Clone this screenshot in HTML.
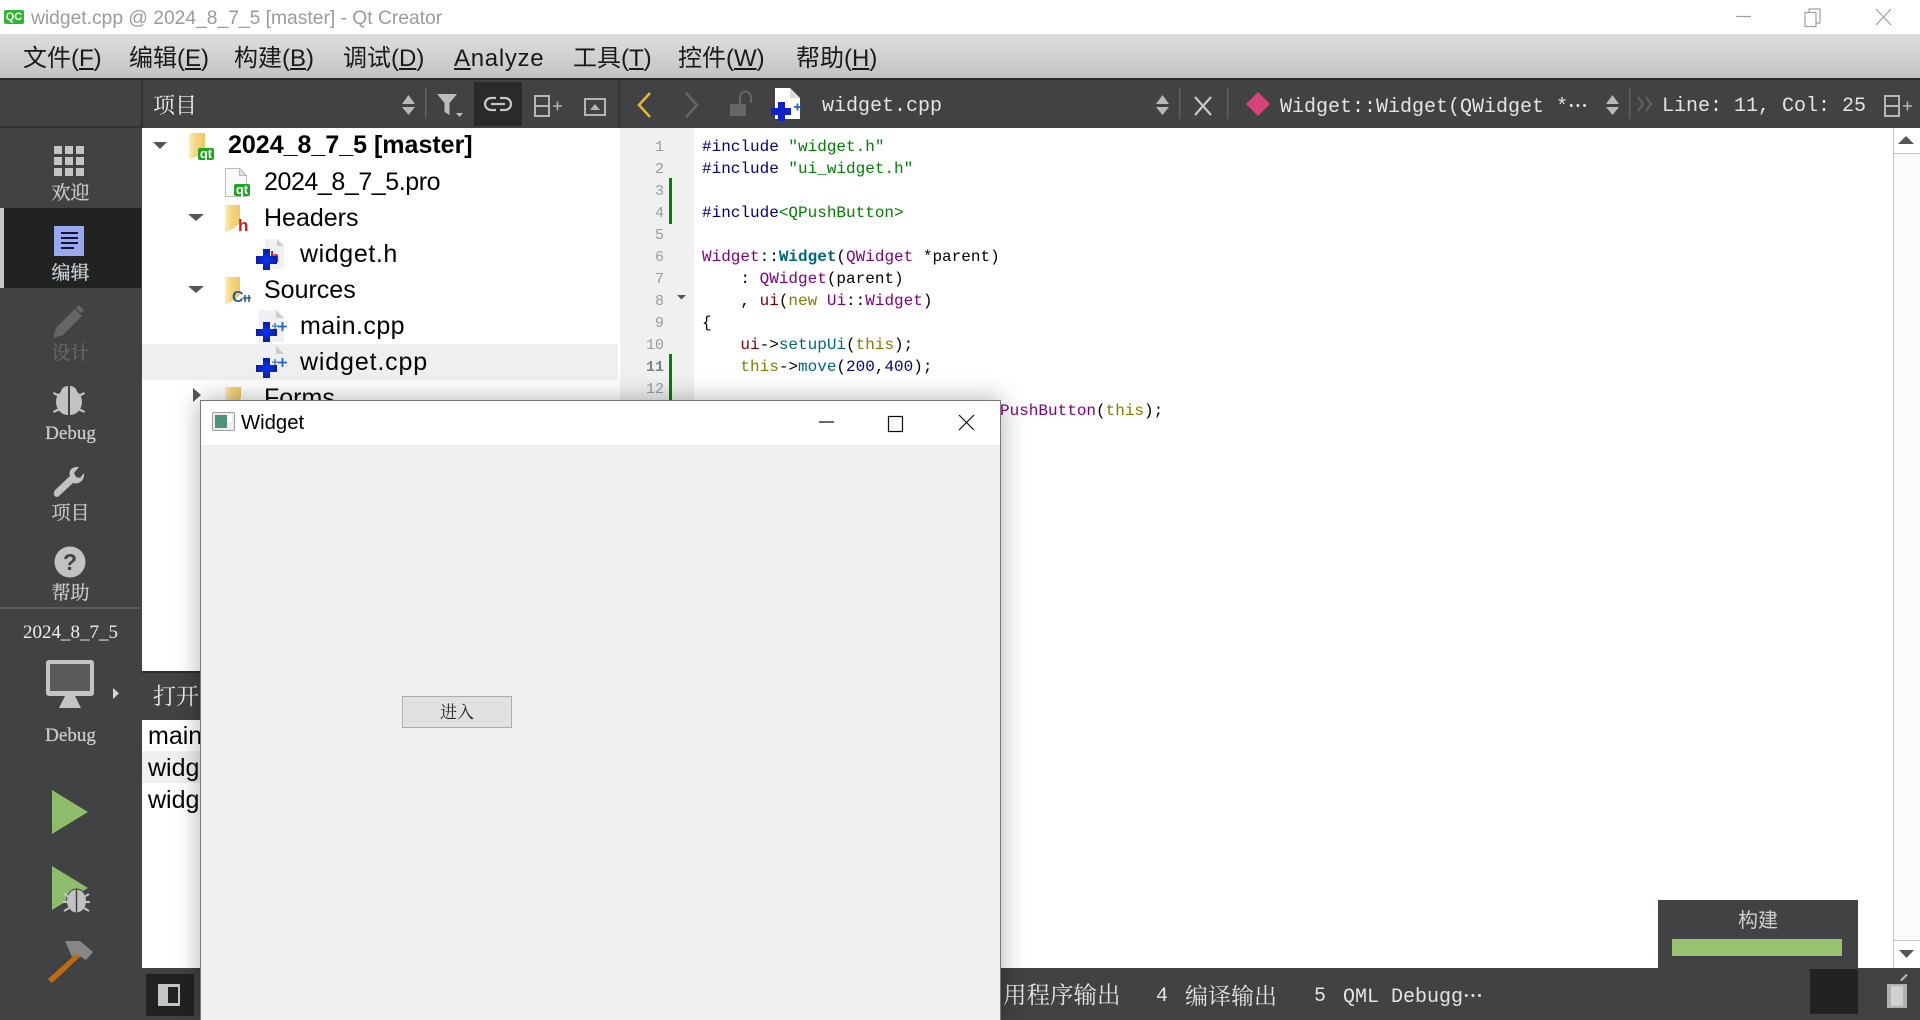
<!DOCTYPE html>
<html><head><meta charset="utf-8"><style>
html,body{margin:0;padding:0;background:#fff}
body{width:1920px;height:1020px;overflow:hidden;position:relative}
.a{position:absolute;white-space:pre}
.b{position:absolute}
.sans{font-family:"Liberation Sans","Noto Sans CJK SC",sans-serif}
.serif{font-family:"Liberation Serif","Noto Serif CJK SC",serif}
.mono{font-family:"Liberation Mono","Noto Serif CJK SC",monospace}
.m{font:24px/44px "Liberation Sans","Noto Sans CJK SC",sans-serif;color:#1a1a1a;top:37px}
.m u{text-underline-offset:2px}
.t{font:25px/36px "Liberation Sans","Noto Sans CJK SC",sans-serif;color:#000}
.s{font:19px/24px "Liberation Serif","Noto Serif CJK SC",serif;color:#c9c9c9;width:141px;left:0;text-align:center;-webkit-text-stroke:.3px}
.tb{font:20px/30px "Liberation Mono","Noto Serif CJK SC",monospace;color:#e4e4e4;top:92px}
.n{font:15px/22px "Liberation Mono",monospace;color:#9a9a9a;width:50px;left:614px;text-align:right}
.c{font:16px/22px "Liberation Mono",monospace;color:#000;left:702px}
.p{color:#800080}.g{color:#008000}.y{color:#808000}.bl{color:#000080}.k{color:#00677c;font-weight:bold}.r{color:#800000}
</style></head><body>

<!-- title bar -->
<div class="b" style="left:0;top:0;width:1920px;height:34px;background:#fff"></div>
<div class="b" style="left:4px;top:10px;width:20px;height:14px;background:#31b531;border-radius:2px;color:#fff;font:bold 11px/14px 'Liberation Sans',sans-serif;text-align:center">QC</div>
<div class="a sans" style="left:31px;top:6px;font-size:19.25px;line-height:26px;color:#9b9b9b">widget.cpp @ 2024_8_7_5 [master] - Qt Creator</div>
<svg class="b" style="left:1730px;top:5px" width="170" height="24" fill="none" stroke="#a0a0a0" stroke-width="1.2">
<path d="M6 11.5H21"/><path d="M75 7.5h11v14H75zM79 7.500V4h11v14h-4"/><path d="M146 4l15 16M161 4l-15 16"/></svg>

<!-- menu -->
<div class="b" style="left:0;top:34px;width:1920px;height:44px;background:linear-gradient(#dedede,#c3c3c3)"></div>
<div class="a m" style="left:23px">文件(<u>F</u>)</div>
<div class="a m" style="left:129px">编辑(<u>E</u>)</div>
<div class="a m" style="left:234px">构建(<u>B</u>)</div>
<div class="a m" style="left:343px">调试(<u>D</u>)</div>
<div class="a m" style="left:454px;letter-spacing:.7px"><u>A</u>nalyze</div>
<div class="a m" style="left:573px">工具(<u>T</u>)</div>
<div class="a m" style="left:678px">控件(<u>W</u>)</div>
<div class="a m" style="left:796px">帮助(<u>H</u>)</div>

<!-- toolbar row -->
<div class="b" style="left:0;top:78px;width:1920px;height:50px;background:#404244;border-top:2px solid #2a2a2a;box-sizing:border-box"></div>
<div class="b" style="left:0;top:126px;width:141px;height:2px;background:#333"></div>
<div class="b" style="left:141px;top:80px;width:2px;height:48px;background:#333"></div>
<div class="b" style="left:618px;top:80px;width:2px;height:48px;background:#333"></div>
<div class="a serif" style="left:153px;top:91px;font-size:22px;line-height:30px;color:#ededed">项目</div>
<div class="b" style="left:474px;top:82px;width:48px;height:44px;background:#2a2a2a"></div>
<svg class="b" style="left:0;top:78px" width="1920" height="50">
<g fill="#b8b8b8">
<path d="M402 26h13l-6.500-9zM402 29h13l-6.500 8z"/>
<path d="M1156 26h13l-6.500-9zM1156 29h13l-6.500 8z"/>
<path d="M1606 26h13l-6.500-9zM1606 29h13l-6.500 8z"/>
</g>
<g fill="#5d5f61"><rect x="425" y="10" width="1.500" height="31"/><rect x="1179" y="10" width="1.500" height="31"/><rect x="1227" y="10" width="1.500" height="31"/><rect x="1629" y="10" width="1.500" height="31"/></g>
<path d="M437 16h20l-7.500 9v12l-5-3v-9z" fill="#bdbdbd"/><path d="M456 35h7l-3.500 4z" fill="#bdbdbd"/>
<g fill="none" stroke="#c4c4c4" stroke-width="2.300"><path d="M496 20h-5a6 6 0 0 0 0 12h5M500 20h5a6 6 0 0 1 0 12h-5M491 26h14"/></g>
<g fill="none" stroke="#b5b5b5" stroke-width="2">
<path d="M535 18h14v20h-14zM535 28h14"/><path d="M553 28h9M557.500 23.500v9" stroke-width="1.500"/>
<path d="M585 21h20v16h-20z"/>
<path d="M1885 18h14v20h-14zM1885 28h14"/><path d="M1903 28h9M1907.500 23.500v9" stroke-width="1.500"/>
</g>
<path d="M590 32l5-6 5 6z" fill="#b5b5b5"/>
<path d="M650 15l-11 12 11 12" fill="none" stroke="#e8b92f" stroke-width="2.500"/>
<path d="M686 15l11 12-11 12" fill="none" stroke="#666" stroke-width="2.500"/>
<path d="M730 26h16v12h-16z" fill="#666"/><path d="M740 26v-7a5 5 0 0 1 11 0v6" fill="none" stroke="#666" stroke-width="2"/>
<path d="M775 10h15l10 10v21h-25z" fill="#fff"/><path d="M790 10v10h10z" fill="#ddd"/>
<path d="M778 24h7v6h6v7h-6v6h-7v-6h-7v-7h7z" fill="#1122cc"/>
<path d="M794 29h7M797.500 25.500v7" stroke="#2266bb" stroke-width="1.800"/>
<path d="M1195 19l16 18M1211 19l-16 18" stroke="#c8c8c8" stroke-width="2.200"/>
<path d="M1258 14l12 12-12 12-12-12z" fill="#d6437a"/>
<path d="M1638 19l5 7-5 7M1646 19l5 7-5 7" fill="none" stroke="#666" stroke-width="1.800"/>
</svg>
<div class="a tb" style="left:822px">widget.cpp</div>
<div class="a tb" style="left:1280px">Widget::Widget(QWidget *<span style="font-size:11px;vertical-align:3px">•••</span></div>
<div class="a tb" style="left:1662px">Line: 11, Col: 25</div>

<!-- sidebar -->
<div class="b" style="left:0;top:128px;width:142px;height:892px;background:#404244"></div>
<div class="b" style="left:0;top:208px;width:141px;height:80px;background:#212222"></div>
<div class="b" style="left:0;top:208px;width:4px;height:80px;background:#c8c8c8"></div>
<div class="b" style="left:0;top:607px;width:140px;height:2px;background:#5a5c5e"></div>
<div class="a s" style="top:182px">欢迎</div>
<div class="a s" style="top:262px;color:#c9d0d8">编辑</div>
<div class="a s" style="top:342px;color:#666">设计</div>
<div class="a s" style="top:422px">Debug</div>
<div class="a s" style="top:502px">项目</div>
<div class="a s" style="top:582px">帮助</div>
<div class="a s" style="top:621px;color:#eee;-webkit-text-stroke:0">2024_8_7_5</div>
<div class="a s" style="top:724px">Debug</div>
<svg class="b" style="left:0;top:128px" width="141" height="892">
<g fill="#c4c4c4">
<rect x="54" y="18" width="8" height="8"/><rect x="65" y="18" width="8" height="8"/><rect x="76" y="18" width="8" height="8"/>
<rect x="54" y="29" width="8" height="8"/><rect x="65" y="29" width="8" height="8"/><rect x="76" y="29" width="8" height="8"/>
<rect x="54" y="40" width="8" height="8"/><rect x="65" y="40" width="8" height="8"/><rect x="76" y="40" width="8" height="8"/>
</g>
<rect x="54" y="98" width="30" height="30" fill="#9aa8ef"/>
<path d="M61 105h17M61 110h17M61 115h17M61 120h13" stroke="#14142e" stroke-width="2"/>
<path d="M53 210l3-10 19-19 7 7-19 19zM76 180l3-3 5 5-3 3z" fill="#666"/>
<g fill="#c2c2c2">
<path d="M68 258c-4 0-7 3-7 6-2 1-5 4-5 10 0 8 6 13 12 13zM70 258c4 0 7 3 7 6 2 1 5 4 5 10 0 8-6 13-12 13z"/>
<path d="M54 264l6 3-1 2-6-3zM84 264l-6 3 1 2 6-3zM53 283l6-3 1 2-6 3zM85 283l-6-3-1 2 6 3z"/>
<path d="M55 362L70 348C68 341 74 338 79 339L74 345L76 349L80 350L84 345C85 352 79 357 73 355L59 368C55 371 52 366 55 362z"/>
<circle cx="70" cy="434" r="15.500"/>
</g>
<text x="70" y="442" text-anchor="middle" font-family="Liberation Sans" font-weight="bold" font-size="23" fill="#404244">?</text>
<rect x="46" y="532" width="48" height="36" rx="3" fill="#c4c4c4"/>
<rect x="50" y="536" width="40" height="27" fill="#5a5a5a"/>
<path d="M65 568h10l6 12H59z" fill="#c4c4c4"/>
<path d="M113 560l6 5.500-6 5.500z" fill="#d4d4d4"/>
<path d="M52 662v44l36-22z" fill="#8fbc6b"/>
<path d="M52 738v44l36-22z" fill="#8fbc6b"/>
<ellipse cx="76.500" cy="773" rx="10" ry="12" fill="#c2c2c2" stroke="#404244"/>
<path d="M76.500 761v24" stroke="#404244" stroke-width="1.500"/>
<path d="M64 766l5 3M89 766l-5 3M63 774h5M90 774h-5M64 783l5-3M89 783l-5-3" stroke="#c2c2c2" stroke-width="2"/>
<path d="M48 851l32-29 3 4-31 29z" fill="#c26a12"/>
<path d="M65 813h15l13 11-7 8-10-6-4 3z" fill="#868686"/>
</svg>

<!-- project tree -->
<div class="b" style="left:142px;top:128px;width:476px;height:543px;background:#fff"></div>
<div class="b" style="left:142px;top:344px;width:476px;height:36px;background:#efefef"></div>
<div class="a t" style="left:228px;top:127px;font-weight:bold">2024_8_7_5 [master]</div>
<div class="a t" style="left:264px;top:164px;letter-spacing:-.43px">2024_8_7_5.pro</div>
<div class="a t" style="left:264px;top:200px">Headers</div>
<div class="a t" style="left:300px;top:236px;letter-spacing:.6px">widget.h</div>
<div class="a t" style="left:264px;top:272px">Sources</div>
<div class="a t" style="left:300px;top:308px;letter-spacing:.45px">main.cpp</div>
<div class="a t" style="left:300px;top:344px;letter-spacing:.85px">widget.cpp</div>
<div class="a t" style="left:264px;top:380px">Forms</div>
<svg class="b" style="left:141px;top:128px" width="477" height="290">
<defs><linearGradient id="fg" x1="0" x2="1" y1="0" y2="0"><stop offset="0" stop-color="#fdf0bd"/><stop offset=".35" stop-color="#f6d884"/><stop offset="1" stop-color="#efc766"/></linearGradient>
<radialGradient id="cg"><stop offset="0" stop-color="#0a36f0"/><stop offset="1" stop-color="#0a1ca8"/></radialGradient></defs>
<g fill="#555">
<path d="M12 14h14l-7 7z"/>
<path d="M47 86h16l-8 7z"/>
<path d="M47 158h16l-8 7z"/>
<path d="M52 260l8 7-8 7z"/>
</g>
<g fill="url(#fg)">
<path d="M48 5h16v17l-6 5-10 5z"/>
<path d="M84 77h15v18l-6 5-9 5z"/>
<path d="M84 149h15v18l-6 5-9 5z"/>
<path d="M84 259h16v10l-7 21h-9z"/>
</g>
<path d="M84.500 40.500h14l7 7v21h-21z" fill="#fafafa" stroke="#bbb"/><path d="M98.500 40.500v7h7z" fill="#e2e2e2" stroke="#bbb"/>
<rect x="57" y="20" width="16" height="12" rx="2" fill="#1da61d"/>
<rect x="93" y="56" width="16" height="12" rx="2" fill="#1da61d"/>
<text x="65" y="30" text-anchor="middle" font-family="Liberation Sans" font-weight="bold" font-size="13" fill="#fff">qt</text>
<text x="101" y="66" text-anchor="middle" font-family="Liberation Sans" font-weight="bold" font-size="13" fill="#fff">qt</text>
<text x="97" y="103" font-family="Liberation Sans" font-weight="bold" font-size="17" fill="#d81818">h</text>
<text x="91" y="174" font-family="Liberation Sans" font-weight="bold" font-size="16" fill="#2d5f86">C</text>
<path d="M102 170h8M104 167v7M108 167v7" stroke="#2d5f86" stroke-width="1.600"/>
<path d="M124 111h12l7 7v23h-19z" fill="#f0f0f4"/><path d="M136 111v7h7z" fill="#ccc"/>
<text x="129" y="134" font-family="Liberation Sans" font-weight="bold" font-size="15" fill="#c02020">h</text>
<path d="M122 121h7v7h7v8h-7v6h-7v-6h-7v-8h7z" fill="url(#cg)"/>
<path d="M118 182h17l8 8v24h-25z" fill="#f0f0f4"/><path d="M135 182v8h8z" fill="#ccc"/>
<path d="M122 194h7v7h7v7h-7v6h-7v-6h-7v-7h7z" fill="url(#cg)"/>
<path d="M131 198h6M134 195v6" stroke="#5588bb" stroke-width="1.600"/>
<path d="M137 198.500h9M141.500 194v9" stroke="#2266bb" stroke-width="1.800"/>
<path d="M118 218h17l8 8v24h-25z" fill="#f0f0f4"/><path d="M135 218v8h8z" fill="#ccc"/>
<path d="M122 230h7v7h7v7h-7v6h-7v-6h-7v-7h7z" fill="url(#cg)"/>
<path d="M131 234h6M134 231v6" stroke="#5588bb" stroke-width="1.600"/>
<path d="M137 234.500h9M141.500 230v9" stroke="#2266bb" stroke-width="1.800"/>
<path d="M100 285l9-9" stroke="#a8520f" stroke-width="4"/>
</svg>

<!-- open docs -->
<div class="b" style="left:142px;top:671px;width:60px;height:49px;background:#404244;border-top:2px solid #2c2c2c;box-sizing:border-box"></div>
<div class="a serif" style="left:153px;top:682px;font-size:23px;line-height:30px;color:#eee">打开</div>
<div class="b" style="left:142px;top:720px;width:60px;height:248px;background:#fff"></div>
<div class="b" style="left:142px;top:751px;width:60px;height:32px;background:#efefef"></div>
<div class="a t" style="left:148px;top:718px">main</div>
<div class="a t" style="left:148px;top:750px">widg</div>
<div class="a t" style="left:148px;top:782px">widg</div>

<!-- editor -->
<div class="b" style="left:620px;top:128px;width:74px;height:840px;background:#f0f0f0"></div>
<div class="b" style="left:669px;top:178px;width:3px;height:46px;background:#008000"></div>
<div class="b" style="left:669px;top:354px;width:3px;height:46px;background:#008000"></div>
<svg class="b" style="left:677px;top:295px" width="10" height="5"><path d="M0 0h9l-4.500 4.500z" fill="#555"/></svg>
<div class="a n" style="top:137px">1</div>
<div class="a n" style="top:159px">2</div>
<div class="a n" style="top:181px">3</div>
<div class="a n" style="top:203px">4</div>
<div class="a n" style="top:225px">5</div>
<div class="a n" style="top:247px">6</div>
<div class="a n" style="top:269px">7</div>
<div class="a n" style="top:291px">8</div>
<div class="a n" style="top:313px">9</div>
<div class="a n" style="top:335px">10</div>
<div class="a n" style="top:357px;font-weight:bold;color:#808080">11</div>
<div class="a n" style="top:379px">12</div>
<div class="a c" style="top:136px"><span class="bl">#include</span> <span class="g">"widget.h"</span></div>
<div class="a c" style="top:158px"><span class="bl">#include</span> <span class="g">"ui_widget.h"</span></div>
<div class="a c" style="top:202px"><span class="bl">#include</span><span class="g">&lt;QPushButton&gt;</span></div>
<div class="a c" style="top:246px"><span class="p">Widget</span>::<span class="k">Widget</span>(<span class="p">QWidget</span> *parent)</div>
<div class="a c" style="top:268px">    : <span class="p">QWidget</span>(parent)</div>
<div class="a c" style="top:290px">    , <span class="r">ui</span>(<span class="y">new</span> <span class="p">Ui</span>::<span class="p">Widget</span>)</div>
<div class="a c" style="top:312px">{</div>
<div class="a c" style="top:334px">    <span class="r">ui</span>-&gt;<span style="color:#00677c">setupUi</span>(<span class="y">this</span>);</div>
<div class="a c" style="top:356px">    <span class="y">this</span>-&gt;<span style="color:#00677c">move</span>(<span class="bl">200</span>,<span class="bl">400</span>);</div>
<div class="a c" style="top:400px;left:1000px"><span class="p">PushButton</span>(<span class="y">this</span>);</div>

<!-- scrollbar -->
<div class="b" style="left:1893px;top:128px;width:27px;height:840px;background:#fbfbfb;border-left:1px solid #c4c4c4;box-sizing:border-box"></div>
<div class="b" style="left:1893px;top:128px;width:27px;height:26px;background:#fff;border-left:1px solid #c4c4c4;border-bottom:1px solid #c4c4c4;box-sizing:border-box"></div>
<div class="b" style="left:1893px;top:940px;width:27px;height:28px;background:#fff;border-left:1px solid #c4c4c4;border-top:1px solid #c4c4c4;box-sizing:border-box"></div>
<svg class="b" style="left:1893px;top:128px" width="27" height="840"><path d="M5 16h16l-8-8zM6 822h15l-7.500 8z" fill="#555"/></svg>

<!-- bottom bar -->
<div class="b" style="left:142px;top:968px;width:1778px;height:52px;background:#404244"></div>
<div class="b" style="left:146px;top:974px;width:48px;height:42px;background:#212222"></div>
<div class="b" style="left:158px;top:984px;width:22px;height:22px;background:#c4c4c4"></div>
<div class="b" style="left:168px;top:987px;width:10px;height:16px;background:#212222"></div>
<div class="a mono" style="left:1003px;top:983px;font-size:23.500px;line-height:30px;color:#e4e4e4">用程序输出</div>
<div class="a mono" style="left:1156px;top:982px;font-size:20px;line-height:30px;color:#e4e4e4">4</div>
<div class="a mono" style="left:1185px;top:983px;font-size:23px;line-height:30px;color:#e4e4e4">编译输出</div>
<div class="a mono" style="left:1314px;top:982px;font-size:20px;line-height:30px;color:#e4e4e4">5</div>
<div class="a mono" style="left:1343px;top:982px;font-size:20px;line-height:30px;color:#e4e4e4">QML Debugg<span style="font-size:11px;vertical-align:3px">•••</span></div>
<div class="b" style="left:1810px;top:968px;width:48px;height:46px;background:#222"></div>
<svg class="b" style="left:1885px;top:970px" width="24" height="40"><path d="M2 14h20v24H2z" fill="#b0b0b0"/><path d="M6 16h12v20H6z" fill="#d0d0d0"/><path d="M15 10l6-6 2 1-6 6z" fill="#bbb"/></svg>

<!-- build popup -->
<div class="b" style="left:1658px;top:900px;width:200px;height:69px;background:#404244"></div>
<div class="b" style="left:1672px;top:939px;width:170px;height:17px;background:#98c270"></div>
<div class="a sans" style="left:1658px;top:907px;width:200px;text-align:center;font-size:20px;line-height:28px;color:#cfcfcf">构建</div>

<!-- widget window -->
<div class="b" style="left:200px;top:400px;width:801px;height:620px;background:#efefef;border:1px solid #777;border-bottom:none;box-sizing:border-box;box-shadow:0 0 24px rgba(0,0,0,.32)">
<div class="b" style="left:0;top:0;width:799px;height:44px;background:#fff"></div>
</div>
<svg class="b" style="left:212px;top:412px" width="24" height="20"><rect x=".5" y=".5" width="22" height="18" rx="1.500" fill="#eee" stroke="#9a9fa5"/><rect x="3" y="3" width="12" height="13" fill="#4c937d"/><rect x="15" y="3" width="5" height="7" fill="#fff"/></svg>
<div class="a sans" style="left:241px;top:409px;font-size:20.300px;line-height:28px;color:#000">Widget</div>
<svg class="b" style="left:800px;top:405px" width="190" height="34" fill="none" stroke="#111" stroke-width="1.200"><path d="M19 17h15M88.500 11.500h14v15h-14zM159 10l15 15M174 10l-15 15"/></svg>
<div class="b" style="left:402px;top:696px;width:110px;height:32px;background:#e1e1e1;border:1px solid #adadad;box-sizing:border-box"></div>
<div class="a serif" style="left:402px;top:699px;width:110px;text-align:center;font-size:17px;line-height:28px;color:#222">进入</div>
</body></html>
